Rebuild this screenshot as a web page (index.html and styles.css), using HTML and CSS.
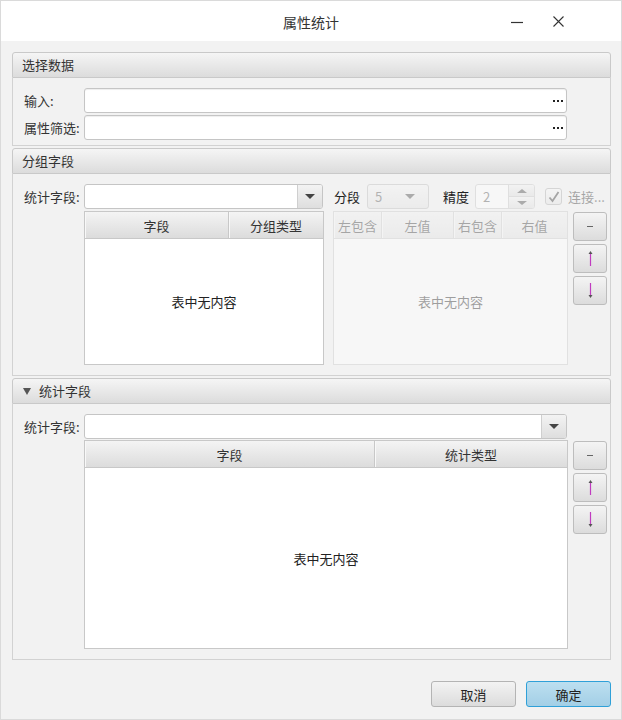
FILE: index.html
```html
<!doctype html>
<html lang="zh">
<head>
    <meta charset="UTF-8">
    <title>属性统计</title>
    <link rel="stylesheet" href="styles.css">
</head>
<body>
<div class="window">
    <header class="titlebar">
        <div></div>
        <div class="title">属性统计</div>
        <div class="win-ctrls">
            <svg width="12" height="12" viewBox="0 0 12 12"><path d="M0 6.5h12" stroke="#333" stroke-width="1.2"/></svg>
            <svg width="11" height="11" viewBox="0 0 11 11"><path d="M0.5 0.5l10 10M10.5 0.5l-10 10" stroke="#333" stroke-width="1.1"/></svg>
        </div>
    </header>

    <main class="content">
        <!-- 选择数据 -->
        <section class="pane">
            <div class="pane-head">选择数据</div>
            <div class="pane-body data-body">
                <div class="row">
                    <span class="lbl">输入:</span>
                    <div class="field wide browse"><span class="dots"><i></i><i></i><i></i></span></div>
                </div>
                <div class="row">
                    <span class="lbl">属性筛选:</span>
                    <div class="field wide browse"><span class="dots"><i></i><i></i><i></i></span></div>
                </div>
            </div>
        </section>

        <!-- 分组字段 -->
        <section class="pane">
            <div class="pane-head">分组字段</div>
            <div class="pane-body group-body">
                <div class="row">
                    <span class="lbl">统计字段:</span>
                    <div class="combo group-combo">
                        <div class="combo-text"></div>
                        <div class="combo-arrow"><span class="tri"></span></div>
                    </div>
                    <div class="tools">
                        <span class="tool-lbl">分段</span>
                        <div class="seg-combo disabled">
                            <span>5</span>
                            <span class="tri"></span>
                        </div>
                        <span class="tool-lbl prec">精度</span>
                        <div class="spinner disabled">
                            <span class="spin-text">2</span>
                            <div class="spin-btns">
                                <div class="spin-up"><span class="tri up"></span></div>
                                <div class="spin-down"><span class="tri"></span></div>
                            </div>
                        </div>
                        <span class="check disabled">
                            <svg width="12" height="12" viewBox="0 0 12 12"><path d="M1.5 6.5l3 3.5 6-9" fill="none" stroke="#333" stroke-width="1.8"/></svg>
                        </span>
                        <span class="check-lbl disabled">连接...</span>
                    </div>
                </div>
                <div class="row tables-row">
                    <div class="grid-table group-table">
                        <div class="th-row">
                            <div class="th col-field">字段</div>
                            <div class="th col-gtype">分组类型</div>
                        </div>
                        <div class="tbody">表中无内容</div>
                    </div>
                    <div class="grid-table range-table disabled">
                        <div class="th-row">
                            <div class="th col-lin">左包含</div>
                            <div class="th col-lval">左值</div>
                            <div class="th col-rin">右包含</div>
                            <div class="th col-rval">右值</div>
                        </div>
                        <div class="tbody">表中无内容</div>
                    </div>
                    <div class="side-btns">
                        <button class="side-btn"><span class="minus"></span></button>
                        <button class="side-btn">
                            <svg width="7" height="15" viewBox="0 0 7 15"><path d="M3.5 2v13" stroke="#c03cc0" stroke-width="1.2"/><path d="M3.5 0l-2 3h4z" fill="#555"/></svg>
                        </button>
                        <button class="side-btn">
                            <svg width="7" height="15" viewBox="0 0 7 15"><path d="M3.5 0v13" stroke="#c03cc0" stroke-width="1.2"/><path d="M3.5 15l-2-3h4z" fill="#555"/></svg>
                        </button>
                    </div>
                </div>
            </div>
        </section>

        <!-- 统计字段 -->
        <section class="pane">
            <div class="pane-head"><span class="expand"></span>统计字段</div>
            <div class="pane-body stat-body">
                <div class="row">
                    <span class="lbl">统计字段:</span>
                    <div class="combo wide">
                        <div class="combo-text"></div>
                        <div class="combo-arrow"><span class="tri"></span></div>
                    </div>
                </div>
                <div class="row tables-row">
                    <div class="grid-table stat-table">
                        <div class="th-row">
                            <div class="th col-sfield">字段</div>
                            <div class="th col-stype">统计类型</div>
                        </div>
                        <div class="tbody">表中无内容</div>
                    </div>
                    <div class="side-btns">
                        <button class="side-btn"><span class="minus"></span></button>
                        <button class="side-btn">
                            <svg width="7" height="15" viewBox="0 0 7 15"><path d="M3.5 2v13" stroke="#c03cc0" stroke-width="1.2"/><path d="M3.5 0l-2 3h4z" fill="#555"/></svg>
                        </button>
                        <button class="side-btn">
                            <svg width="7" height="15" viewBox="0 0 7 15"><path d="M3.5 0v13" stroke="#c03cc0" stroke-width="1.2"/><path d="M3.5 15l-2-3h4z" fill="#555"/></svg>
                        </button>
                    </div>
                </div>
            </div>
        </section>
    </main>

    <footer class="actions">
        <button class="btn">取消</button>
        <button class="btn primary">确定</button>
    </footer>
</div>
</body>
</html>
```

FILE: styles.css
```css
* {
    box-sizing: border-box;
}
html, body {
    margin: 0;
    padding: 0;
}
body {
    width: 622px;
    height: 720px;
    font-family: "Noto Sans CJK SC", "Noto Sans", sans-serif;
    font-size: 13px;
    color: #333;
    background-color: #f2f2f2;
}
.window {
    height: 720px;
    border: 1px solid #dadada;
    background-color: #f2f2f2;
    display: flex;
    flex-direction: column;
}

/* title bar */
.titlebar {
    height: 40px;
    flex: none;
    background-color: #fff;
    display: grid;
    grid-template-columns: 1fr auto 1fr;
    align-items: center;
}
.title {
    font-size: 14px;
    color: #333;
    padding-top: 1px;
}
.win-ctrls {
    display: flex;
    justify-content: flex-end;
    align-items: center;
    gap: 30px;
    padding-right: 57px;
    padding-top: 1px;
}
.win-ctrls svg {
    display: block;
}

/* panes */
.content {
    padding: 11px 10px 0 11px;
}
.pane {
    margin-bottom: 2px;
}
.pane:last-child {
    margin-bottom: 0;
}
.pane-head {
    height: 26px;
    border: 1px solid #c9c9c9;
    border-radius: 3px 3px 0 0;
    background: linear-gradient(#f5f5f5, #dcdcdc);
    display: flex;
    align-items: center;
    padding-left: 9px;
    line-height: 24px;
}
.expand {
    width: 0;
    height: 0;
    border-left: 4px solid transparent;
    border-right: 4px solid transparent;
    border-top: 7px solid #555;
    margin: 0 8px 0 1px;
}
.pane-body {
    border: 1px solid #d2d2d2;
    border-top: none;
    padding: 10px 2px 0 11px;
}
.data-body {
    padding-bottom: 5px;
    display: flex;
    flex-direction: column;
    gap: 2px;
}
.group-body, .stat-body {
    padding-bottom: 10px;
    display: flex;
    flex-direction: column;
    gap: 2px;
}
.stat-body {
    gap: 1px;
}
.row {
    display: flex;
    align-items: center;
    height: 25px;
}
.lbl {
    width: 60px;
    flex: none;
    white-space: nowrap;
    line-height: 18px;
}
.tables-row {
    align-items: flex-start;
    padding-left: 60px;
    height: auto;
}

/* inputs */
.field {
    height: 25px;
    background-color: #fff;
    border: 1px solid #c5c5c5;
    border-radius: 3px;
    box-shadow: inset 0 1px 1px #eee;
}
.wide {
    width: 483px;
}
.browse {
    display: flex;
    justify-content: flex-end;
    align-items: center;
    padding-right: 3px;
}
.dots {
    display: flex;
    gap: 2px;
}
.dots i {
    width: 2px;
    height: 2px;
    background-color: #222;
}
.combo {
    height: 25px;
    display: flex;
    background-color: #fff;
    border: 1px solid #c5c5c5;
    border-radius: 3px;
    overflow: hidden;
}
.group-combo {
    width: 239px;
}
.combo-text {
    flex: 1;
}
.combo-arrow {
    width: 25px;
    border-left: 1px solid #cfcfcf;
    background: linear-gradient(#f3f3f3, #dedede);
    display: flex;
    align-items: center;
    justify-content: center;
}
.tri {
    width: 0;
    height: 0;
    border-left: 5px solid transparent;
    border-right: 5px solid transparent;
    border-top: 5px solid #444;
}
.tri.up {
    border-top: none;
    border-bottom: 5px solid #444;
}

/* group tools */
.tools {
    display: flex;
    align-items: center;
    margin-left: 10px;
    white-space: nowrap;
    line-height: 18px;
}
.tool-lbl {
    margin-left: 1px;
    color: #222;
}
.prec {
    margin-left: 14px;
}
.disabled {
    opacity: 0.4;
}
.seg-combo {
    width: 62px;
    height: 25px;
    margin-left: 7px;
    border: 1px solid #b9b9b9;
    border-radius: 3px;
    background: linear-gradient(#f5f5f5, #e2e2e2);
    display: flex;
    align-items: center;
    justify-content: space-between;
    padding: 0 13px 0 7px;
    color: #555;
}
.spinner {
    width: 60px;
    height: 25px;
    margin-left: 6px;
    border: 1px solid #c5c5c5;
    border-radius: 3px;
    background-color: #fff;
    display: flex;
    overflow: hidden;
}
.spin-text {
    flex: 1;
    padding-left: 7px;
    line-height: 23px;
    color: #555;
}
.spin-btns {
    width: 26px;
    border-left: 1px solid #c5c5c5;
    display: flex;
    flex-direction: column;
}
.spin-up, .spin-down {
    flex: 1;
    background: linear-gradient(#f3f3f3, #dedede);
    display: flex;
    align-items: center;
    justify-content: center;
}
.spin-up {
    border-bottom: 1px solid #c5c5c5;
}
.spin-btns .tri {
    border-left-width: 5px;
    border-right-width: 5px;
    border-top-width: 4px;
}
.spin-btns .tri.up {
    border-bottom-width: 4px;
}
.check {
    width: 17px;
    height: 17px;
    margin-left: 10px;
    border: 1px solid #aaa;
    border-radius: 3px;
    background: linear-gradient(#f8f8f8, #e4e4e4);
    display: flex;
    align-items: center;
    justify-content: center;
}
.check-lbl {
    margin-left: 6px;
    color: #333;
}

/* tables */
.grid-table {
    border: 1px solid #c8c8c8;
    background-color: #fff;
    display: flex;
    flex-direction: column;
}
.th-row {
    height: 27px;
    flex: none;
    display: flex;
    border-bottom: 1px solid #c8c8c8;
    background: linear-gradient(#f4f4f4, #dcdcdc);
}
.th {
    display: flex;
    align-items: center;
    justify-content: center;
    border-right: 1px solid #c8c8c8;
    box-shadow: inset 1px 0 0 #f8f8f8;
    white-space: nowrap;
}
.th:last-child {
    border-right: none;
}
.tbody {
    flex: 1;
    display: flex;
    align-items: center;
    justify-content: center;
    color: #222;
}
.group-table {
    width: 240px;
    height: 154px;
}
.range-table {
    width: 235px;
    height: 154px;
    margin-left: 9px;
}
.range-table .th-row {
    background: linear-gradient(#f2f2f2, #e2e2e2);
}
.col-field { width: 144px; }
.col-gtype { flex: 1; }
.col-lin { width: 48px; }
.col-lval { width: 72px; }
.col-rin { width: 48px; }
.col-rval { flex: 1; }
.stat-table {
    width: 484px;
    height: 209px;
}
.col-sfield { width: 290px; }
.col-stype { flex: 1; }

/* side buttons */
.side-btns {
    margin-left: 5px;
    padding-top: 1px;
    display: flex;
    flex-direction: column;
    gap: 3px;
}
.side-btn {
    width: 34px;
    height: 29px;
    padding: 0;
    border: 1px solid #bdbdbd;
    border-radius: 3px;
    background: linear-gradient(#f4f4f4, #dcdcdc);
    display: flex;
    align-items: center;
    justify-content: center;
}
.side-btn svg {
    display: block;
}
.minus {
    width: 6px;
    height: 1.5px;
    background-color: #666;
}

/* footer */
.actions {
    display: flex;
    justify-content: flex-end;
    gap: 10px;
    padding: 21px 10px 0 0;
}
.btn {
    width: 85px;
    height: 26px;
    border: 1px solid #b4b4b4;
    border-radius: 3px;
    background: linear-gradient(#f3f3f3, #dcdcdc);
    font-family: "Noto Sans CJK SC", "Noto Sans", sans-serif;
    font-size: 13px;
    color: #222;
    padding: 0;
}
.btn.primary {
    border-color: #2fa0d8;
    background: linear-gradient(#bcdff0, #a3cfe6);
}
```
